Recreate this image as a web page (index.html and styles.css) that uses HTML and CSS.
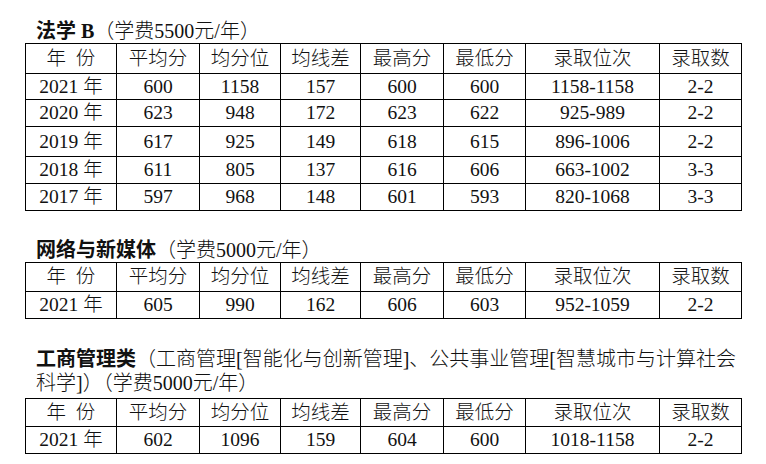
FILE: index.html
```html
<!DOCTYPE html>
<html lang="zh-CN">
<head>
<meta charset="utf-8">
<title>录取分数</title>
<link rel="stylesheet" href="styles.css">
</head>
<body>
<div class="page">
  <section class="block block-first">
    <h2 class="title"><b>法学 B</b>（学费5500元/年）</h2>
    <table class="grid">
      <colgroup>
        <col class="c1"><col class="c2"><col class="c3"><col class="c4"><col class="c5"><col class="c6"><col class="c7"><col class="c8">
      </colgroup>
      <tr class="h30"><td>年&ensp;份</td><td>平均分</td><td>均分位</td><td>均线差</td><td>最高分</td><td>最低分</td><td>录取位次</td><td>录取数</td></tr>
      <tr class="h26"><td>2021 年</td><td>600</td><td>1158</td><td>157</td><td>600</td><td>600</td><td>1158-1158</td><td>2-2</td></tr>
      <tr class="h27"><td>2020 年</td><td>623</td><td>948</td><td>172</td><td>623</td><td>622</td><td>925-989</td><td>2-2</td></tr>
      <tr class="h30"><td>2019 年</td><td>617</td><td>925</td><td>149</td><td>618</td><td>615</td><td>896-1006</td><td>2-2</td></tr>
      <tr class="h27"><td>2018 年</td><td>611</td><td>805</td><td>137</td><td>616</td><td>606</td><td>663-1002</td><td>3-3</td></tr>
      <tr class="h27"><td>2017 年</td><td>597</td><td>968</td><td>148</td><td>601</td><td>593</td><td>820-1068</td><td>3-3</td></tr>
    </table>
  </section>

  <section class="block block-second">
    <h2 class="title"><b>网络与新媒体</b>（学费5000元/年）</h2>
    <table class="grid">
      <colgroup>
        <col class="c1"><col class="c2"><col class="c3"><col class="c4"><col class="c5"><col class="c6"><col class="c7"><col class="c8">
      </colgroup>
      <tr class="h29"><td>年&ensp;份</td><td>平均分</td><td>均分位</td><td>均线差</td><td>最高分</td><td>最低分</td><td>录取位次</td><td>录取数</td></tr>
      <tr class="h27"><td>2021 年</td><td>605</td><td>990</td><td>162</td><td>606</td><td>603</td><td>952-1059</td><td>2-2</td></tr>
    </table>
  </section>

  <section class="block block-third">
    <h2 class="title title-long"><b>工商管理类</b><span>（工商管理[智能化与创新管理]、公共事业管理[智慧城市与计算社会</span><br><span>科学]）（学费5000元/年）</span></h2>
    <table class="grid">
      <colgroup>
        <col class="c1"><col class="c2"><col class="c3"><col class="c4"><col class="c5"><col class="c6"><col class="c7"><col class="c8">
      </colgroup>
      <tr class="h28"><td>年&ensp;份</td><td>平均分</td><td>均分位</td><td>均线差</td><td>最高分</td><td>最低分</td><td>录取位次</td><td>录取数</td></tr>
      <tr class="h27"><td>2021 年</td><td>602</td><td>1096</td><td>159</td><td>604</td><td>600</td><td>1018-1158</td><td>2-2</td></tr>
    </table>
  </section>
</div>
</body>
</html>
```

FILE: styles.css
```css
html, body {
  margin: 0;
  padding: 0;
  background: #ffffff;
}

body {
  width: 766px;
  height: 464px;
  overflow: hidden;
  color: #111111;
  font-family: "Liberation Serif", "Noto Sans CJK SC", serif;
}

.page {
  padding: 19px 0 0 25px;
}

.block-second {
  margin-top: 27px;
}

.block-third {
  margin-top: 28px;
}

.title {
  margin: 0 0 0 11px;
  width: 720px;
  font-size: 20px;
  line-height: 24px;
  font-weight: 300;
}

.title b {
  font-weight: 700;
}

.title-long {
  margin-bottom: 3px;
}

.grid {
  border-collapse: collapse;
  table-layout: fixed;
  width: 716px;
  font-size: 19.5px;
  font-weight: 300;
}

.grid td {
  border: 1px solid #000000;
  padding: 0;
  text-align: center;
  vertical-align: middle;
  line-height: 22px;
  white-space: nowrap;
}

.c1 { width: 91px; }
.c2 { width: 83px; }
.c3 { width: 81px; }
.c4 { width: 80px; }
.c5 { width: 83px; }
.c6 { width: 82px; }
.c7 { width: 134px; }
.c8 { width: 82px; }

.h26 { height: 26px; }
.h27 { height: 27px; }
.h28 { height: 28px; }
.h29 { height: 29px; }
.h30 { height: 30px; }
```
